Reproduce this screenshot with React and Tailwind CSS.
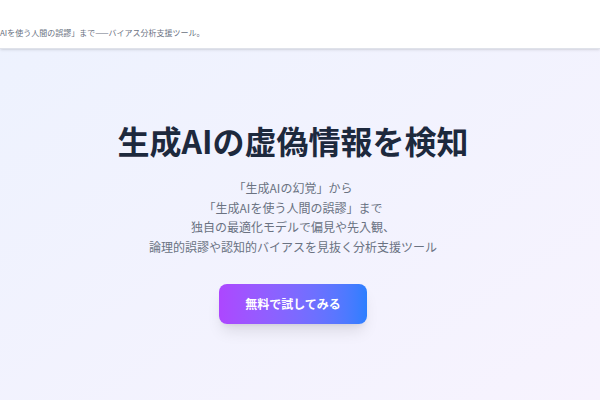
import React from 'react'

const font = { fontFamily: '"Noto Sans CJK JP", "Noto Sans", sans-serif' }

export default function App() {
  return (
    <div className="w-[600px] h-[400px] overflow-hidden flex flex-col bg-gradient-to-br from-[#edf2fe] to-[#f7f3fe]" style={font}>
      <header className="h-[49px] shrink-0 bg-white border-b border-[#dfe2ea] shadow-sm flex items-end pb-[11px] overflow-hidden">
        <p className="text-[8px] leading-none text-gray-500 whitespace-nowrap">
          AIを使う人間の誤謬」まで——バイアス分析支援ツール。
        </p>
      </header>
      <main className="flex-1 flex flex-col items-center pr-[14px] pt-[71px]">
        <h1 className="text-[32px] leading-[40px] font-bold text-slate-800">
          生成AIの虚偽情報を検知
        </h1>
        <div className="mt-[18px] text-[12px] leading-[19.5px] text-gray-500 text-center">
          <p>「生成AIの幻覚」から</p>
          <p>「生成AIを使う人間の誤謬」まで</p>
          <p>独自の最適化モデルで偏見や先入観、</p>
          <p>論理的誤謬や認知的バイアスを見抜く分析支援ツール</p>
        </div>
        <button className="mt-[28px] h-[40px] px-[26px] rounded-lg bg-gradient-to-r from-purple-500 to-blue-500 text-white text-[12px] font-bold shadow-lg">
          無料で試してみる
        </button>
      </main>
    </div>
  )
}
